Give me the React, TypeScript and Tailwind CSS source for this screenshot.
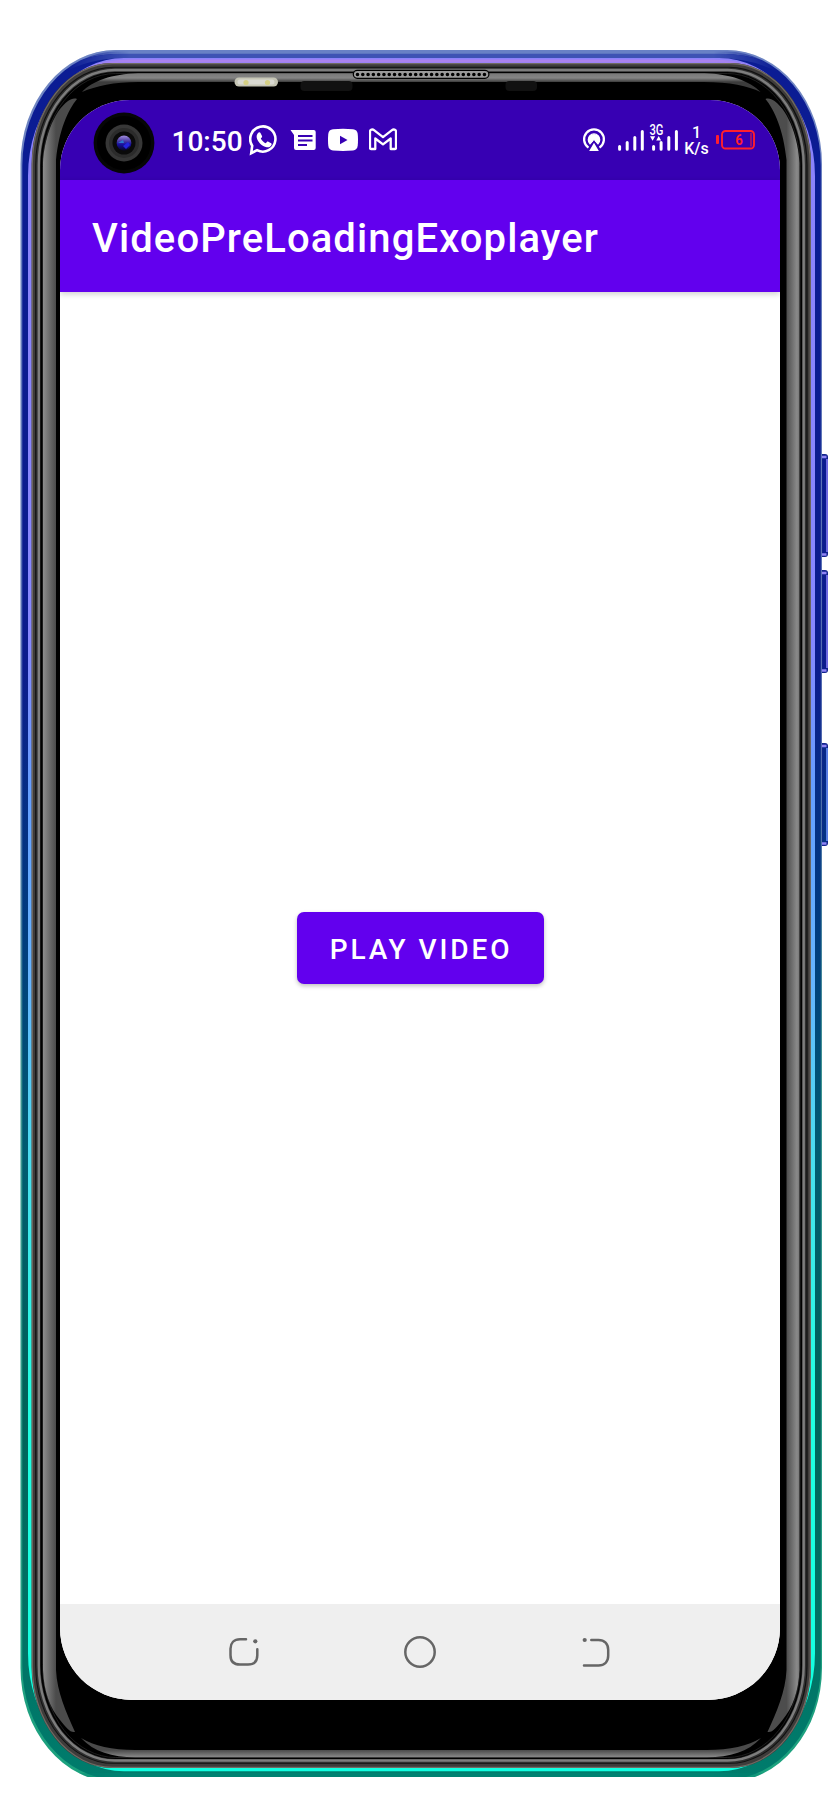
import React from "react";

function shell(l: number, t: number, r: number, b: number, rx: number, ry: number) {
  return `M${l + rx} ${t}H${r - rx}A${rx} ${ry} 0 0 1 ${r} ${t + ry}V${b - ry}A${rx} ${ry} 0 0 1 ${r - rx} ${b}H${l + rx}A${rx} ${ry} 0 0 1 ${l} ${b - ry}V${t + ry}A${rx} ${ry} 0 0 1 ${l + rx} ${t}Z`;
}

function SideGloss({ side }: { side: string }) {
  return (
    <path
      fill={`url(#${side})`}
      d="M43 163C44 140 53 112 68 101C71 99 74 98 77 99C68 110 59 130 56 160V1670C57 1692 66 1712 75 1732C70 1733 66 1727 60 1720C50 1708 44 1692 43 1670Z"
    />
  );
}

function Frame() {
  const keys = [454, 570, 743];
  return (
    <svg className="absolute left-0 top-0" width="840" height="1800" viewBox="0 0 840 1800" fill="none">
      <defs>
        <linearGradient id="edge" x1="0" y1="50" x2="0" y2="1777" gradientUnits="userSpaceOnUse">
          <stop offset="0" stopColor="#7288c4" />
          <stop offset="0.4" stopColor="#5068ae" />
          <stop offset="0.6" stopColor="#3d9390" />
          <stop offset="1" stopColor="#1ba27e" />
        </linearGradient>
        <linearGradient id="rim" x1="0" y1="50" x2="0" y2="1777" gradientUnits="userSpaceOnUse">
          <stop offset="0" stopColor="#0b1c94" />
          <stop offset="0.36" stopColor="#0b1c8c" />
          <stop offset="0.43" stopColor="#052d85" />
          <stop offset="0.5" stopColor="#00397f" />
          <stop offset="0.64" stopColor="#005b70" />
          <stop offset="0.78" stopColor="#006259" />
          <stop offset="1" stopColor="#007c6c" />
        </linearGradient>
        <linearGradient id="glow" x1="0" y1="50" x2="0" y2="1777" gradientUnits="userSpaceOnUse">
          <stop offset="0" stopColor="#8c82fa" />
          <stop offset="0.34" stopColor="#8788ff" />
          <stop offset="0.43" stopColor="#659fff" />
          <stop offset="0.54" stopColor="#66b5ff" />
          <stop offset="0.65" stopColor="#48e0ee" />
          <stop offset="0.78" stopColor="#22ffe2" />
          <stop offset="1" stopColor="#10ffe0" />
        </linearGradient>
        <linearGradient id="left" x1="43" y1="0" x2="56" y2="0" gradientUnits="userSpaceOnUse">
          <stop offset="0" stopColor="#8c8c8c" />
          <stop offset="1" stopColor="#4b4b4b" />
        </linearGradient>
        <linearGradient id="right" x1="43" y1="0" x2="56" y2="0" gradientUnits="userSpaceOnUse">
          <stop offset="0" stopColor="#777" />
          <stop offset="0.2" stopColor="#8a8a8a" />
          <stop offset="1" stopColor="#4d4d4d" />
        </linearGradient>
        <linearGradient id="topGloss" x1="0" y1="73" x2="0" y2="82" gradientUnits="userSpaceOnUse">
          <stop offset="0" stopColor="#777" />
          <stop offset="0.55" stopColor="#858585" />
          <stop offset="1" stopColor="#3c3c3c" />
        </linearGradient>
        <linearGradient id="bottomGloss" x1="0" y1="1750" x2="0" y2="1757" gradientUnits="userSpaceOnUse">
          <stop offset="0" stopColor="#4a4a4a" />
          <stop offset="1" stopColor="#888" />
        </linearGradient>
        <linearGradient id="fade" x1="65" y1="0" x2="778" y2="0" gradientUnits="userSpaceOnUse">
          <stop offset="0" stopColor="#fff" stopOpacity="0" />
          <stop offset="0.09" stopColor="#fff" />
          <stop offset="0.91" stopColor="#fff" />
          <stop offset="1" stopColor="#fff" stopOpacity="0" />
        </linearGradient>
        <mask id="ends" maskUnits="userSpaceOnUse" x="0" y="0" width="840" height="1800">
          <rect x="65" y="40" width="713" height="1750" fill="url(#fade)" />
        </mask>
        <clipPath id="body">
          <path d={shell(20.5, 50, 822, 1782, 95, 114)} />
        </clipPath>
        <clipPath id="cut">
          <rect x="0" y="0" width="840" height="1777" />
        </clipPath>
      </defs>

      {keys.map((y) => (
        <g key={y}>
          <rect x="819" y={y} width="9" height="103" rx="3" fill="#12238d" />
          <rect x="822.5" y={y + 3} width="4" height="98" rx="1" fill="url(#rim)" />
          <path d={`M827 ${y + 5}v93`} stroke={y > 700 ? "#709bff" : "#8c82fa"} strokeWidth="1.5" />
          <path d={`M822 ${y + 3}h4.5M822 ${y + 100.5}h4.5`} stroke="#8f84f5" strokeWidth="2.4" />
        </g>
      ))}

      <g clipPath="url(#cut)">
        <path d={shell(20.5, 50, 822, 1782, 95, 114)} fill="url(#edge)" />
        <path d={shell(22.3, 51.5, 820.8, 1779.5, 94.5, 114)} fill="url(#rim)" />
        <g clipPath="url(#body)">
          <g mask="url(#ends)">
            <path d="M60 68Q85 52 120 52H722Q757 52 782 68" stroke="#6981c5" strokeWidth="4" />
            <path d="M60 72Q88 56 122 56H720Q754 56 782 72" stroke="#3e53b4" strokeWidth="4.5" />
            <path d="M60 1775H780" stroke="#008272" strokeWidth="4" />
          </g>
        </g>
        <path d={shell(28, 58, 815, 1771.3, 96, 118)} fill="url(#glow)" />
        <g mask="url(#ends)">
          <path d="M92 67Q106 61 130 61H712Q736 61 750 67" stroke="#ab82ee" strokeWidth="3" />
        </g>
      </g>
      <path d={shell(31.6, 63, 811, 1768, 80, 101)} fill="#3e3c3b" />
      <path d={shell(32.3, 63.7, 810.3, 1767.3, 80, 101)} stroke="#716a63" strokeWidth="1.2" />
      <path d={shell(35.2, 66.8, 807.6, 1763.8, 78, 98)} fill="#101010" />
      <path d={shell(36.2, 67.8, 806.4, 1763, 77.5, 97)} fill="#303030" />
      <path d={shell(38.8, 70, 803.7, 1760.5, 76, 95)} stroke="#7d7d7d" strokeWidth="2.4" />
      <path d={shell(40.5, 72, 802, 1759, 75, 94)} fill="#000" />
      <path d={shell(42.6, 73.5, 800.2, 1757.5, 73, 93)} stroke="#262626" strokeWidth="0.8" />

      <SideGloss side="left" />
      <g transform="translate(842.5 0) scale(-1 1)">
        <SideGloss side="right" />
      </g>
      <path
        fill="url(#topGloss)"
        d="M82 92C92 81 112 74 138 73.3H704.5C730 74 750 81 760.5 92C748 86 730 82 704 82H138C114 82 96 86 82 92Z"
      />
      <path
        fill="url(#bottomGloss)"
        d="M81 1738C94 1752 112 1757 135 1757.3H707C730 1757 748 1752 761 1738C748 1746 730 1750 707 1750H135C112 1750 94 1746 81 1738Z"
      />

      <rect x="300.5" y="81" width="52" height="10" rx="4" fill="#111" />
      <rect x="505.5" y="81" width="31.5" height="10" rx="4" fill="#111" />
      <rect x="234.5" y="77.5" width="43.5" height="9" rx="4.5" fill="#c5c5b5" />
      <path d="M240 82h32" stroke="#d9d9d2" strokeWidth="5" strokeLinecap="round" />
      <circle cx="246" cy="82.5" r="2.6" fill="#d4cf85" />
      <circle cx="267.5" cy="82.5" r="2.6" fill="#d4cf85" />
      <rect x="353.3" y="70.3" width="135.6" height="8" rx="4" fill="#9a9a9a" stroke="#000" strokeWidth="1.2" />
      <path
        d="M357.5 74.5H487"
        stroke="#000"
        strokeWidth="3.6"
        strokeLinecap="round"
        strokeDasharray="0 5.29"
      />
    </svg>
  );
}

function Camera() {
  return (
    <svg className="h-[62px] w-[62px]" viewBox="-31 -31 62 62">
      <defs>
        <linearGradient id="lens" x1="0" y1="-7" x2="0" y2="7" gradientUnits="userSpaceOnUse">
          <stop offset="0" stopColor="#9a86d8" />
          <stop offset="0.4" stopColor="#42339f" />
          <stop offset="0.6" stopColor="#1710a0" />
          <stop offset="1" stopColor="#07072e" />
        </linearGradient>
      </defs>
      <circle r="30.4" fill="#060606" />
      <circle r="27" fill="#000" />
      <circle r="18.5" fill="#373737" />
      <circle r="15" fill="#2b2b2b" />
      <circle r="11.5" fill="#0a0a0a" />
      <circle r="7.4" fill="url(#lens)" />
      <path d="M-6 0l5-3 1 3z" fill="#2c78ce" />
      <path d="M-1 3l5-4 2 3-4 4z" fill="#2424dd" />
    </svg>
  );
}

function StatusBar() {
  return (
    <div className="flex h-20 shrink-0 items-center bg-[#3700b3] text-white">
      <div className="ml-[33px] mt-[6px] h-[62px] w-[62px]">
        <Camera />
      </div>
      <div className="ml-[16.5px] mt-[4px] w-[71px] whitespace-nowrap text-[28px] font-medium leading-8">10:50</div>
      <svg className="ml-[6px] h-8 w-[29px]" viewBox="249 124 29 32">
        <path
          d="M252.2 145.8A12.6 12.6 0 1 1 257 150.2L251.2 153.2Z"
          fill="none"
          stroke="#fff"
          strokeWidth="2.6"
          strokeLinejoin="miter"
        />
        <path
          fill="#fff"
          d="M258.6 132.5c.7-.5 1.5-.3 1.9.4l1.5 3c.3.6.1 1.2-.3 1.6l-.9 1c1.1 2.2 2.8 3.8 4.9 4.8l1.2-1.3c.4-.5 1-.5 1.500-.2l2.700 1.500c.6.4.7 1.100.4 1.700-1 1.900-2.800 2.600-4.700 2.200-5-1-9.200-5-10.100-9.700-.3-2 .4-3.900 1.900-5z"
        />
      </svg>
      <svg className="ml-[12px] h-8 w-[26px]" viewBox="290 124 26 32">
        <path fill="#fff" d="M290.500 130h23.200a2 2 0 0 1 2 2v16a2 2 0 0 1-2 2H296a2 2 0 0 1-2-2v-13z" />
        <path stroke="#3700b3" strokeWidth="1.900" d="M298 136h14.500M298 140.500h14.500M298 145h9" />
      </svg>
      <svg className="ml-[12px] h-8 w-[30px]" viewBox="328 124 30 32">
        <path
          fill="#fff"
          d="M333 129.300q10-.9 20 0 4.200.4 4.700 4.500.6 6 0 12-.5 4.300-4.700 4.700-10 .9-20 0-4.200-.4-4.700-4.700-.6-6 0-12 .5-4.100 4.700-4.500z"
        />
        <path fill="#3700b3" d="M340 135.800v8.400l7.500-4.200z" />
      </svg>
      <svg className="ml-[11px] h-8 w-[28px]" viewBox="369 124 28 32">
        <path
          d="M370 131.500V148a1 1 0 0 0 1 1h4.300V138.500l7.700 5.900 7.700-5.900V149H395a1 1 0 0 0 1-1v-16.500c0-1.800-2.500-2.600-4-1.400l-9 7-9-7c-1.500-1.200-4-.4-4 1.400z"
          fill="none"
          stroke="#fff"
          strokeWidth="2.300"
          strokeLinejoin="round"
        />
      </svg>
      <svg className="ml-[185px] h-8 w-[24px]" viewBox="582 124 24 32">
        <path d="M588.500 147.600A9.900 9.900 0 1 1 599.500 147.600" fill="none" stroke="#fff" strokeWidth="2.300" />
        <path d="M590 143.700A5.700 5.700 0 1 1 598 143.700L594 139.500Z" fill="#fff" stroke="#fff" strokeWidth="1.300" />
        <path d="M594 141.300l6.200 10.500h-12.400z" fill="#fff" stroke="#3700b3" strokeWidth="1.400" />
      </svg>
      <svg className="ml-[12px] h-11 w-[61px]" viewBox="618 118 61 44">
        <path
          d="M619.600 146.500v2.800M627.200 142.500v6.800M634.800 137.500v11.800M642.300 131.500v17.800M653.600 146.500v2.800M661.100 142.500v6.800M668.800 137.500v11.800M676.400 131.500v17.800"
          stroke="#fff"
          strokeWidth="3"
          strokeLinecap="round"
        />
        <text
          x="649.500"
          y="135.300"
          fill="#fff"
          fontSize="14"
          fontWeight="500"
          textLength="14"
          lengthAdjust="spacingAndGlyphs"
        >
          3G
        </text>
        <path fill="#fff" d="M650 136.300h5.200l-2.600 4.500zM656.200 140.600h5l-2.500-4.500z" />
      </svg>
      <div className="ml-[5px] mt-[2px] flex w-[26px] flex-col items-center text-[16px] font-medium leading-[16px]">
        <span>1</span>
        <span>K/s</span>
      </div>
      <svg className="ml-[6px] h-8 w-[40px]" viewBox="716 124 40 32">
        <rect x="716" y="135" width="3" height="9" rx="1" fill="#ff1f2d" />
        <rect x="722" y="131" width="32" height="17.500" rx="3.500" fill="none" stroke="#ff1f2d" strokeWidth="1.900" />
        <path d="M751 133v13.500" stroke="#ff1f2d" strokeWidth="1" />
        <text x="735.300" y="145" fill="#ff1f2d" fontSize="15" fontWeight="700" textLength="7.500" lengthAdjust="spacingAndGlyphs">
          6
        </text>
      </svg>
    </div>
  );
}

function NavBar() {
  return (
    <nav className="flex h-24 shrink-0 items-center bg-[#efefef] pl-[168px]">
      <svg className="h-8 w-8" viewBox="228 1636 32 32" fill="none" stroke="#666" strokeWidth="2.500" strokeLinecap="round">
        <path d="M246 1639.300h-6c-6 0-9.500 4-9.500 9.500v6.500c0 6 3.500 9.300 9.500 9.300h8c6 0 9.300-3.500 9.300-9.300v-6" />
        <circle cx="255.300" cy="1641.300" r="2.100" fill="#666" stroke="none" />
      </svg>
      <svg className="ml-[144px] h-8 w-8" viewBox="404 1636 32 32" fill="none" stroke="#666" strokeWidth="2.500">
        <circle cx="420" cy="1652" r="14.700" />
      </svg>
      <svg className="ml-[144px] h-8 w-8" viewBox="580 1636 32 32" fill="none" stroke="#666" strokeWidth="2.500" strokeLinecap="round">
        <path d="M591.300 1640h7.200c6 0 9.700 4 9.700 9.700v6c0 6-3.700 9.700-9.700 9.700h-14.500" />
        <circle cx="584.700" cy="1640" r="2.100" fill="#666" stroke="none" />
      </svg>
    </nav>
  );
}

export default function App() {
  return (
    <div className="relative h-[1800px] w-[840px] overflow-hidden bg-white px-[60px] pt-[100px] font-['Roboto',sans-serif]">
      <Frame />
      <div className="relative flex h-[1600px] w-[720px] flex-col overflow-hidden rounded-t-[70px] rounded-b-[72px] bg-white">
        <StatusBar />
        <header className="z-10 flex h-28 shrink-0 items-center bg-[#6200ee] pl-8 pt-[5px] text-white shadow-[0_2px_6px_rgba(0,0,0,0.2)]">
          <h1 className="whitespace-nowrap text-[40px] font-medium leading-none tracking-[1.1px]">
            VideoPreLoadingExoplayer
          </h1>
        </header>
        <main className="flex flex-1 items-center justify-center">
          <button className="flex h-[72px] w-[247px] items-center justify-center rounded-[7px] bg-[#6200ee] pl-[2px] pt-[4px] text-[28px] font-medium leading-none tracking-[2.9px] text-white shadow-[0_2px_4px_rgba(0,0,0,0.25)]">
            PLAY VIDEO
          </button>
        </main>
        <NavBar />
      </div>
    </div>
  );
}
